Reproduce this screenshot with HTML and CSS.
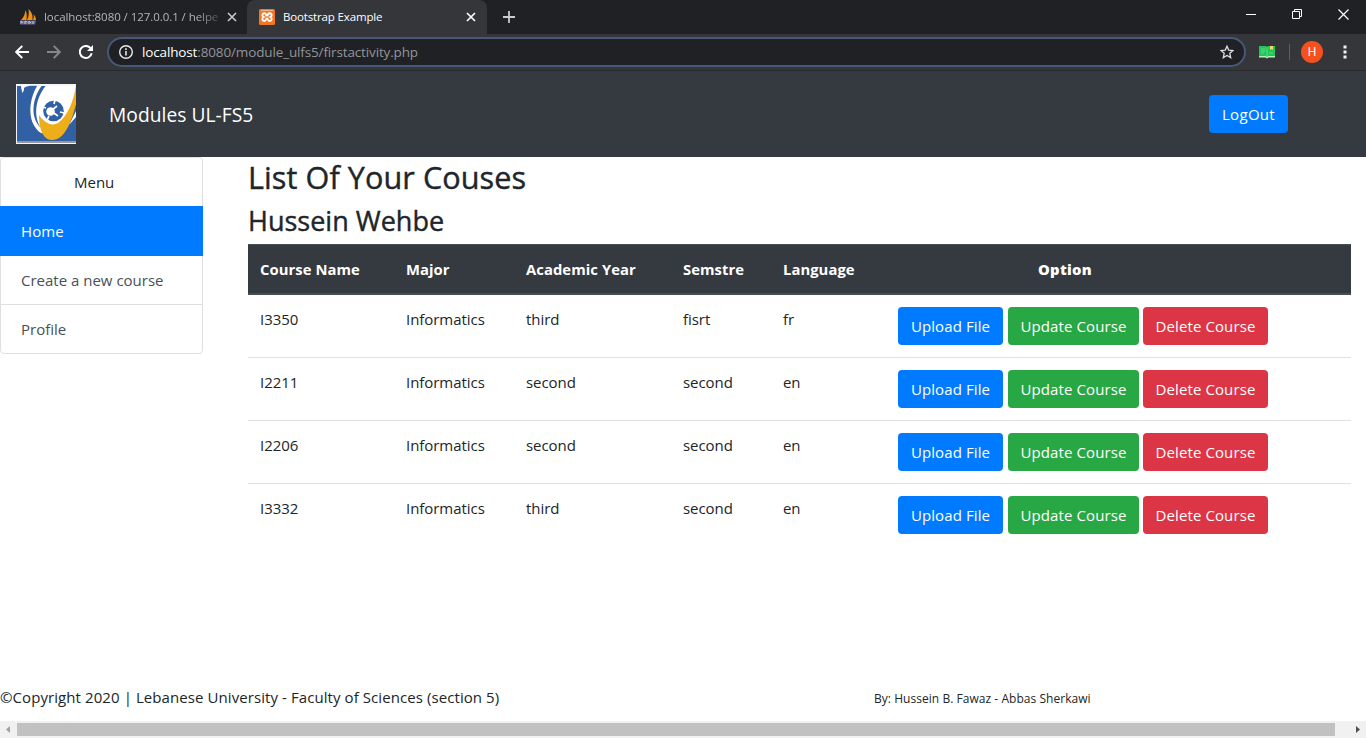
FILE: index.html
```
<!DOCTYPE html>
<html lang="en">
<head>
<meta charset="utf-8">
<title>Bootstrap Example</title>
<link rel="stylesheet" href="styles.css">
</head>
<body>
<div class="tabs">
  <div class="tab tab-back">
    <svg class="fav" width="18" height="16" viewBox="0 0 18 16"><path d="M2 11C5 8 6 5 6.500 1C8 4 8 8 7.500 11ZM8 11C10 7 10 4 9.500 0C13 3 14 7 13.500 11ZM14 11C15 9 15 7 14.500 5C16 7 17 9 17 11Z" fill="#f29111"/><path d="M1 11.500H17L16 15.500H1Z" fill="#686b91"/><path d="M2 14.500V12L4 13.500M6 15V12L8 13M10 15V12L12 14M14 12V15" stroke="#c3c4d8" fill="none"/></svg>
    <span class="tab-name fade">localhost:8080 / 127.0.0.1 / helpe</span>
    <svg class="close" width="10" height="10" viewBox="0 0 10 10"><path d="M1 1L9 9M9 1L1 9" stroke="#c4c7ca" stroke-width="1.700"/></svg>
  </div>
  <div class="tab tab-on">
    <svg class="fav" width="16" height="16" viewBox="0 0 16 16"><rect width="16" height="16" rx="1.500" fill="#f37623"/><path d="M2 1.500H14" stroke="#f9b183"/><path d="M5.500 4.200C3 4.200 2.500 7 4.700 8C2.500 9 3 12 5.500 12C7.500 12 6.700 9.500 8 9.500S8.500 12 10.500 12C13 12 13.500 9 11.300 8C13.500 7 13 4.200 10.500 4.200C8.500 4.200 9.300 6.600 8 6.600S7.500 4.200 5.500 4.200Z" fill="none" stroke="#fff" stroke-width="1.900"/></svg>
    <span class="tab-name">Bootstrap Example</span>
    <svg class="close" width="10" height="10" viewBox="0 0 10 10"><path d="M1 1L9 9M9 1L1 9" stroke="#fff" stroke-width="1.700"/></svg>
  </div>
  <svg class="plus" width="12" height="12" viewBox="0 0 12 12"><path d="M6 0V12M0 6H12" stroke="#c9ccd0" stroke-width="1.800"/></svg>
  <div class="win">
    <svg width="10" height="10" viewBox="0 0 10 10"><path d="M0 5.500H10" stroke="#fff"/></svg>
    <svg width="10" height="10" viewBox="0 0 10 10"><path d="M.5 2.500H7.500V9.500H.5ZM2.500 2.500V.5H9.500V7.500H7.500" fill="none" stroke="#fff"/></svg>
    <svg width="11" height="11" viewBox="0 0 11 11"><path d="M.5.5L10.500 10.500M10.500.5L.5 10.500" stroke="#fff" stroke-width="1.200"/></svg>
  </div>
</div>
<div class="toolbar">
  <svg width="14" height="14" viewBox="0 0 14 14"><path d="M14 7H1.500M7.300 .8L1.200 7L7.300 13.200" fill="none" stroke="#fff" stroke-width="1.900"/></svg>
  <svg width="14" height="14" viewBox="0 0 14 14"><path d="M0 7H12.500M6.700 .8L12.800 7L6.700 13.200" fill="none" stroke="#85878a" stroke-width="1.900"/></svg>
  <svg width="14" height="14" viewBox="0 0 14 14"><path d="M12.700 8.300A6 6 0 1 1 11.300 2.900L12.500 4" fill="none" stroke="#fff" stroke-width="2"/><path d="M14 0V6H8Z" fill="#fff"/></svg>
  <div class="address">
    <svg width="14" height="14" viewBox="0 0 14 14"><circle cx="7" cy="7" r="6.300" fill="none" stroke="#e8eaed" stroke-width="1.400"/><path d="M7 6V10.600M7 3.300V4.900" stroke="#e8eaed" stroke-width="1.600"/></svg>
    <span class="url"><b>localhost</b>:8080/module_ulfs5/firstactivity.php</span>
    <svg width="14" height="14" viewBox="0 0 14 14"><path d="M7 1.200L8.700 5.100L13 5.500L9.800 8.300L10.700 12.600L7 10.400L3.300 12.600L4.200 8.300L1 5.500L5.300 5.100Z" fill="none" stroke="#dcdee0" stroke-width="1.300"/></svg>
  </div>
  <svg class="book" width="16" height="14" viewBox="0 0 16 14"><path d="M0 1H7L8 2L9 1H16V12H9L8 13L7 12H0Z" fill="#1fc659"/><path d="M0 11H7L8 12L9 11H16V12.500H9.500L8 13.500L6.500 12.500H0Z" fill="#b9edb9"/><path d="M8 2V11.500M2 4H6M2 6H6M2 8H5M10 8H14" stroke="#78e494" stroke-width=".7"/><path d="M11 1H14V5L12.500 4L11 5Z" fill="#f8d568"/></svg>
  <i class="sep"></i>
  <span class="avatar">H</span>
  <svg class="dots" width="4" height="14" viewBox="0 0 4 14"><path d="M.5 .5H3.500V3.500H.5ZM.5 5.500H3.500V8.500H.5ZM.5 10.500H3.500V13.500H.5Z" fill="#f1f3f4"/></svg>
</div>
<header class="navbar">
  <svg class="logo" width="60" height="60" viewBox="0 0 60 60">
    <rect width="60" height="60" fill="#f4f5f7"/>
    <path d="M1 2H60V57H1Z" fill="#3260a5"/>
    <path d="M5 1H20V2C13 2 9 4 6.500 9C5.500 6 5 4 5 1Z" fill="#fff"/>
    <path d="M8 4C12 1 17 2 23 2L17 20H7Z" fill="#3260a5"/>
    <path d="M21 2H60V30L40 52L25 49C11 40 12 17 21 2Z" fill="#fff"/>
    <path d="M25.500 2H29.500C18 17 18 34 25 44C14 34 16 15 25.500 2Z" fill="#3260a5"/>
    <path d="M60 20V57H30Z" fill="#3260a5"/>
    <path d="M60 33L53 41L57 33L60 27Z" fill="#fff"/>
    <path d="M60 1C58 17 51 33 42 39C35 43 28 38 23 31C23 45 27 56 36 56C48 56 55 40 60 20Z" fill="#edae19"/>
    <circle cx="37.500" cy="27" r="10.300" fill="#3260a5"/>
    <path d="M27 23L30 24M39 16L38 20M48 29L44 28M31 36L33 32M35 27L41 22M35 27L42 32" stroke="#fff" stroke-width="1.700"/>
    <circle cx="34.500" cy="27.500" r="4.300" fill="#fff"/>
    <path d="M1 58H60" stroke="#77797f" stroke-width="1.500"/>
  </svg>
  <span class="brand">Modules UL-FS5</span>
  <a class="btn primary logout">LogOut</a>
</header>
<div class="main">
  <nav class="menu">
    <div class="item menu-title">Menu</div>
    <a class="item active">Home</a>
    <a class="item">Create a new course</a>
    <a class="item last">Profile</a>
  </nav>
  <main class="content">
    <h2>List Of Your Couses</h2>
    <h3>Hussein Wehbe</h3>
    <table>
      <colgroup><col class="c1"><col class="c2"><col class="c3"><col class="c4"><col class="c5"><col class="c6"></colgroup>
      <thead><tr><th>Course Name</th><th>Major</th><th>Academic Year</th><th>Semstre</th><th>Language</th><th class="option">Option</th></tr></thead>
      <tbody>
        <tr><td>I3350</td><td>Informatics</td><td>third</td><td>fisrt</td><td>fr</td><td><div class="actions"><a class="btn primary upload">Upload File</a><a class="btn success update">Update Course</a><a class="btn danger delete">Delete Course</a></div></td></tr>
        <tr><td>I2211</td><td>Informatics</td><td>second</td><td>second</td><td>en</td><td><div class="actions"><a class="btn primary upload">Upload File</a><a class="btn success update">Update Course</a><a class="btn danger delete">Delete Course</a></div></td></tr>
        <tr><td>I2206</td><td>Informatics</td><td>second</td><td>second</td><td>en</td><td><div class="actions"><a class="btn primary upload">Upload File</a><a class="btn success update">Update Course</a><a class="btn danger delete">Delete Course</a></div></td></tr>
        <tr><td>I3332</td><td>Informatics</td><td>third</td><td>second</td><td>en</td><td><div class="actions"><a class="btn primary upload">Upload File</a><a class="btn success update">Update Course</a><a class="btn danger delete">Delete Course</a></div></td></tr>
      </tbody>
    </table>
  </main>
</div>
<footer class="footer">
  <span class="copy">©Copyright 2020 | Lebanese University - Faculty of Sciences (section 5)</span>
  <span class="by">By: Hussein B. Fawaz - Abbas Sherkawi</span>
</footer>
<div class="scroll">
  <svg width="17" height="17" viewBox="0 0 17 17"><path d="M10 5V12L6 8.500Z" fill="#a3a3a3"/></svg>
  <div class="thumb"></div>
  <svg width="17" height="17" viewBox="0 0 17 17"><path d="M7 5V12L11 8.500Z" fill="#505050"/></svg>
</div>
</body>
</html>
```
FILE: styles.css
```
* { box-sizing: border-box; }
body {
  margin: 0;
  width: 1366px;
  height: 738px;
  overflow: hidden;
  display: flex;
  flex-direction: column;
  background: #fff;
  color: #212529;
  font: 15px/24px "Open Sans", "Noto Sans", sans-serif;
  letter-spacing: 0.06px;
}
svg { display: block; flex: none; }
span, a, th, td { white-space: nowrap; }

.tabs { height: 34px; flex: none; display: flex; background: #202124; }
.tab { display: flex; align-items: center; height: 34px; font-size: 11.5px; line-height: 16px; letter-spacing: -0.15px; }
.tab-back { width: 247px; padding: 0 10px 0 19px; color: #b2b5b9; }
.tab-on { width: 240px; padding: 0 11px 0 12px; color: #fff; background: #35363a; border-radius: 8px 8px 0 0; }
.tab-back .tab-name { margin-left: 7px; font-size: 11.5px; letter-spacing: -0.06px; }
.tab-on .tab-name { margin-left: 8px; }
.fade { -webkit-mask-image: linear-gradient(90deg, #000 152px, transparent 182px); mask-image: linear-gradient(90deg, #000 152px, transparent 182px); }
.close { margin-left: auto; }
.plus { margin: 11px 0 0 16px; }
.win { margin: 9px 17px 0 auto; display: flex; gap: 36px; }

.toolbar { height: 37px; flex: none; display: flex; align-items: center; padding: 0 19px 1px 15px; background: #35363a; border-bottom: 1px solid #28292b; }
.toolbar > svg + svg { margin-left: 18px; }
.address { width: 1139px; height: 30px; margin-left: 14px; padding: 0 10px; display: flex; align-items: center; border: 2px solid #465978; border-radius: 15px; background: #202124; }
.url { margin: 0 auto 0 9px; font-size: 13.5px; letter-spacing: -0.14px; color: #929498; }
.url b { font-weight: 400; color: #fff; }
.toolbar .book { margin-left: 13px; }
.sep { width: 1px; height: 16px; margin-left: 14px; background: #5f6063; }
.avatar { width: 22px; height: 22px; margin-left: 11px; border-radius: 50%; background: #f4511e; color: #fff; font: 12px/22px Roboto, sans-serif; text-align: center; }
.toolbar .dots { margin-left: auto; }

.navbar { height: 86px; flex: none; display: flex; align-items: center; padding: 0 78px 0 16px; background: #343a40; }
.brand { margin: 2px auto 0 33px; color: #fff; font-size: 19.2px; line-height: 30px; letter-spacing: 0.05px; }
.btn { display: block; height: 38px; line-height: 38px; border-radius: 4px; color: #fff; text-align: center; }
.primary { background: #007bff; }
.success { background: #28a745; }
.danger { background: #dc3545; }
.logout { width: 79px; letter-spacing: 0.3px; }

.main { flex: 1; display: flex; align-items: flex-start; }
.menu { width: 203px; border: 1px solid #dfdfdf; border-radius: 4px; }
.item { display: block; height: 49px; padding: 0 20px; line-height: 48px; color: #495057; border-bottom: 1px solid #dfdfdf; letter-spacing: 0; }
.menu .menu-title { height: 48px; padding: 0 0 0 73px; line-height: 48px; color: #212529; border: 0; }
.menu .active { height: 50px; margin: 0 -1px; padding-left: 21px; line-height: 50px; background: #007bff; color: #fff; border: 0; letter-spacing: 0.1px; }
.menu .last { height: 48px; border: 0; line-height: 49px; }

.content { width: 1103px; margin-left: 45px; }
h2, h3 { margin: 0; font-weight: 500; white-space: nowrap; -webkit-text-stroke: 0.4px #212529; }
h2 { height: 46px; padding-top: 1px; font-size: 30.6px; line-height: 39px; letter-spacing: 0.08px; }
h3 { height: 41px; font-size: 27px; line-height: 35px; letter-spacing: 0; }
table { width: 1103px; table-layout: fixed; border-collapse: separate; border-spacing: 0; }
.c1 { width: 146px; }
.c2 { width: 120px; }
.c3 { width: 157px; }
.c4 { width: 100px; }
.c5 { width: 115px; }
.c6 { width: 465px; }
th { height: 51px; padding: 0 12px; background: #343a40; border-top: 1px solid #454d55; border-bottom: 2px solid #454d55; color: #fff; font-size: 14.8px; font-weight: 700; letter-spacing: 0.06px; text-align: left; }
th.option { padding-left: 152px; font-weight: 800; letter-spacing: 0.3px; }
td { height: 63px; padding: 12px; vertical-align: top; border-top: 1px solid #dee2e6; letter-spacing: -0.05px; }
tbody tr:first-child td { height: 62px; border-top: 0; }
.actions { display: flex; letter-spacing: 0.1px; }
.upload { width: 105px; margin-right: 5px; }
.update { width: 131px; margin-right: 4px; }
.delete { width: 125px; }

.footer { height: 36px; flex: none; display: flex; }
.copy { width: 874px; letter-spacing: 0.08px; }
.by { font-size: 12px; line-height: 27px; letter-spacing: 0.04px; }
.scroll { height: 17px; flex: none; display: flex; background: #f1f1f1; }
.thumb { width: 1318px; height: 13px; margin: 2px 14px 0 0; background: #c1c1c1; }
```
